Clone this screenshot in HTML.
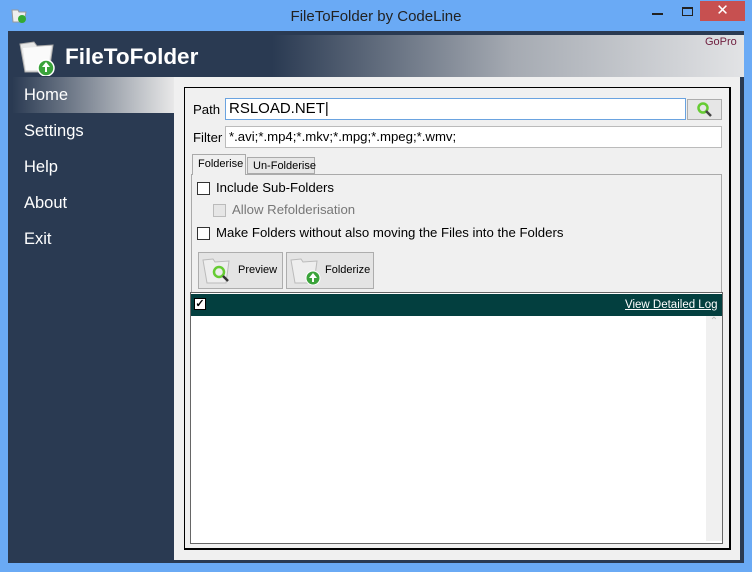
<!DOCTYPE html><html><head><style>
*{margin:0;padding:0;box-sizing:border-box}
body{width:752px;height:572px;background:#6aaaf5;font-family:"Liberation Sans",sans-serif;position:relative;overflow:hidden}
.a{position:absolute;white-space:nowrap}
.t{font-size:13.2px;color:#000}
</style></head><body>
<div class="a" style="left:0;top:8px;width:752px;text-align:center;font-size:15px;color:#222">FileToFolder by CodeLine</div>
<svg class="a" style="left:10px;top:7px" width="18" height="16"><path d="M2 3h6l1 2h7l-2 10H3z" fill="#eee" stroke="#999"/><circle cx="12" cy="12" r="4" fill="#3a3"/></svg>
<div class="a" style="left:652px;top:13px;width:11px;height:2px;background:#222"></div>
<div class="a" style="left:682px;top:7px;width:11px;height:9px;border:1px solid #222;border-top-width:2px"></div>
<div class="a" style="left:700px;top:1px;width:45px;height:20px;background:#c75050;color:#fff;text-align:center;font-size:15px;line-height:20px">✕</div>
<div class="a" style="left:8px;top:31px;width:736px;height:532px;background:#2a3a52"></div>
<div class="a" style="left:12px;top:35px;width:732px;height:42px;background:linear-gradient(90deg,#2a3a52 0,#2a3a52 260px,#a5aab2 500px,#e2e3e5 732px)"></div>
<svg class="a" style="left:17px;top:38px" width="42" height="38"><path d="M3 6l14-2 3 4 16-1-4 27H8z" fill="#e8e8e8" stroke="#aaa"/><path d="M6 10l28-2-3 24H9z" fill="#fafafa"/><circle cx="29" cy="30" r="8" fill="#3aa33a" stroke="#fff" stroke-width="1.5"/><path d="M29 24l-4 5h3v5h2v-5h3z" fill="#fff"/></svg>
<div class="a" style="left:65px;top:44px;font-size:22.5px;font-weight:bold;color:#fff">FileToFolder</div>
<div class="a" style="left:705px;top:36px;font-size:11px;color:#702040">GoPro</div>
<div class="a" style="left:174px;top:77px;width:566px;height:483px;background:#f0f0f0"></div>
<div class="a" style="left:12px;top:77px;width:162px;height:36px;background:linear-gradient(90deg,#2a3a52,#e8e8e8)"></div>
<div class="a" style="left:24px;top:77px;font-size:16.5px;color:#fff;line-height:36px">Home<br>Settings<br>Help<br>About<br>Exit</div>
<div class="a" style="left:184px;top:87px;width:547px;height:463px;border:1px solid #000;border-right-width:2px;border-bottom-width:2px"></div>
<div class="a t" style="left:193px;top:102px">Path</div>
<div class="a" style="left:225px;top:98px;width:461px;height:22px;background:#fff;border:1px solid #6aa3e0;font-size:15px;padding:1px 3px">RSLOAD.NET|</div>
<div class="a" style="left:687px;top:99px;width:35px;height:21px;background:#e6e6e6;border:1px solid #adadad"></div>
<svg class="a" style="left:697px;top:102px" width="16" height="16"><circle cx="6" cy="6" r="4.5" fill="none" stroke="#6c3" stroke-width="2.5"/><path d="M9 9l5 5" stroke="#444" stroke-width="2.5"/></svg>
<div class="a t" style="left:193px;top:130px">Filter</div>
<div class="a" style="left:225px;top:126px;width:497px;height:22px;background:#fff;border:1px solid #bbb;font-size:13.2px;padding:2px 3px">*.avi;*.mp4;*.mkv;*.mpg;*.mpeg;*.wmv;</div>
<div class="a" style="left:191px;top:174px;width:531px;height:119px;border:1px solid #aaa;background:#f0f0f0"></div>
<div class="a" style="left:192px;top:154px;width:54px;height:21px;background:#f0f0f0;border:1px solid #aaa;border-bottom:none;font-size:11px;padding:3px 0 0 5px">Folderise</div>
<div class="a" style="left:247px;top:157px;width:68px;height:17px;background:#e6e6e6;border:1px solid #aaa;font-size:11px;padding:2px 0 0 5px">Un-Folderise</div>
<div class="a" style="left:197px;top:182px;width:13px;height:13px;border:1px solid #333;background:#fff"></div>
<div class="a t" style="left:216px;top:180px">Include Sub-Folders</div>
<div class="a" style="left:213px;top:204px;width:13px;height:13px;border:1px solid #bbb;background:#e6e6e6"></div>
<div class="a t" style="left:232px;top:202px;color:#777">Allow Refolderisation</div>
<div class="a" style="left:197px;top:227px;width:13px;height:13px;border:1px solid #333;background:#fff"></div>
<div class="a t" style="left:216px;top:225px">Make Folders without also moving the Files into the Folders</div>
<div class="a" style="left:198px;top:252px;width:85px;height:37px;background:#e4e4e4;border:1px solid #adadad"></div>
<div class="a" style="left:286px;top:252px;width:88px;height:37px;background:#e4e4e4;border:1px solid #adadad"></div>
<svg class="a" style="left:201px;top:254px" width="34" height="34"><path d="M2 6l10-1 2 3 14-1-3 22H6z" fill="#eee" stroke="#bbb"/><circle cx="18" cy="18" r="5" fill="none" stroke="#6c3" stroke-width="2.5"/><path d="M22 22l5 5" stroke="#333" stroke-width="2.5"/></svg>
<svg class="a" style="left:289px;top:254px" width="34" height="34"><path d="M2 6l10-1 2 3 14-1-3 22H6z" fill="#eee" stroke="#bbb"/><circle cx="24" cy="24" r="7" fill="#3aa33a" stroke="#fff"/><path d="M24 19l-4 5h3v4h2v-4h3z" fill="#fff"/></svg>
<div class="a" style="left:238px;top:264px;font-size:11px">Preview</div>
<div class="a" style="left:325px;top:264px;font-size:11px">Folderize</div>
<div class="a" style="left:190px;top:292px;width:533px;height:252px;border:1px solid #666;background:#fff"></div>
<div class="a" style="left:191px;top:294px;width:531px;height:22px;background:#033f3f"></div>
<div class="a" style="left:194px;top:298px;width:12px;height:12px;background:#fff;border:1px solid #000;font-size:11px;line-height:10px;text-align:center;font-weight:bold">✓</div>
<div class="a" style="left:625px;top:299px;font-size:11.5px;color:#fff;text-decoration:underline">View Detailed Log</div>
<div class="a" style="left:706px;top:316px;width:16px;height:225px;background:#f0f0f0;color:#bbb;font-size:10px;text-align:center">⌃</div>
</body></html>
